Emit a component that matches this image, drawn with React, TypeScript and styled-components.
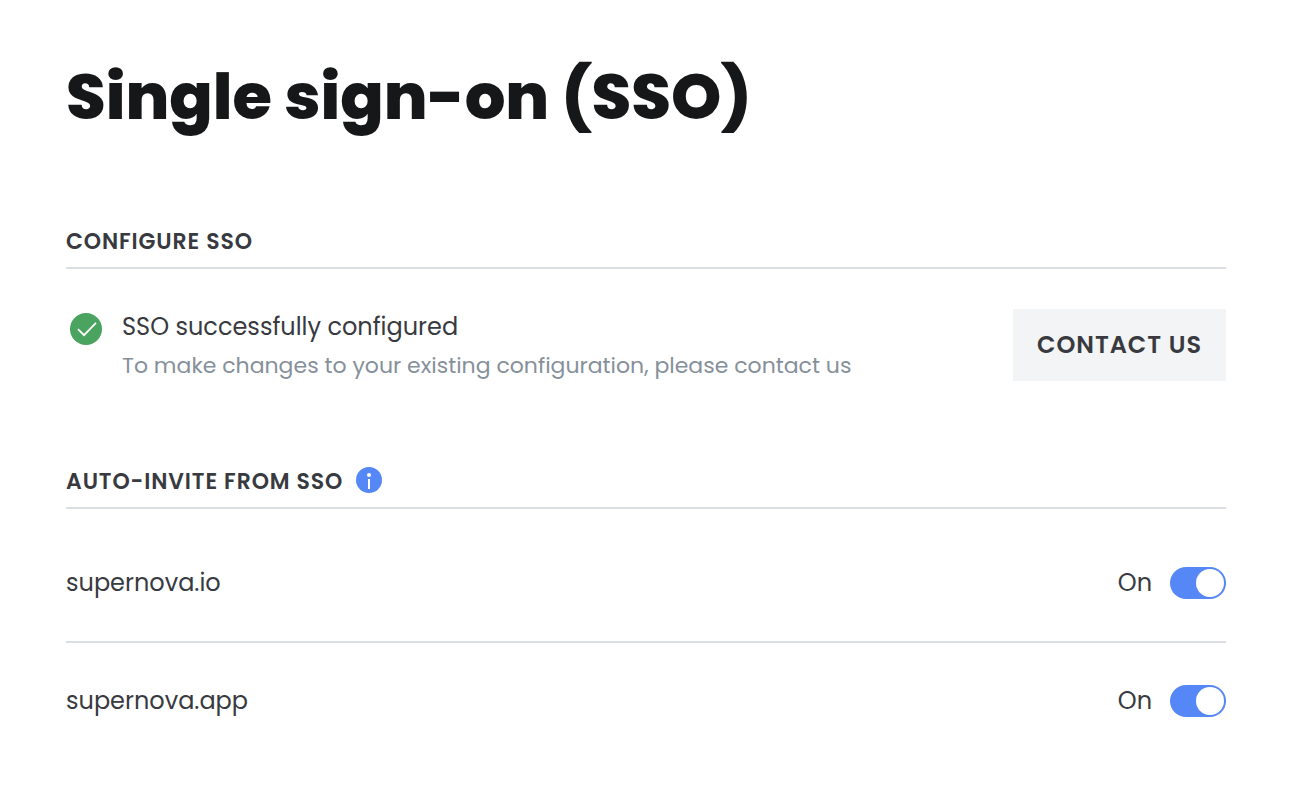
import React, { useState } from "react";
import styled, { createGlobalStyle } from "styled-components";

const GlobalStyle = createGlobalStyle`
  *, *::before, *::after { box-sizing: border-box; }
  body {
    margin: 0;
    background: #ffffff;
    color: #383a3f;
    font-family: Poppins, Inter, "Open Sans", sans-serif;
    font-size: 24px;
  }
`;

const Page = styled.main`
  padding: 48px 72px 40px 66px;
`;

const Title = styled.h1`
  margin: 0;
  color: #161718;
  font-size: 64px;
  line-height: 98px;
  font-weight: 800;
`;

const Section = styled.section`
  margin-top: 70px;
`;

const SectionHeader = styled.header`
  display: flex;
  align-items: center;
  gap: 13px;
  height: 53px;
  border-bottom: 2px solid #dadee2;
`;

const SectionTitle = styled.h2`
  margin: 0;
  font-size: 22px;
  line-height: 32px;
  font-weight: 600;
  letter-spacing: 0.04em;
  text-transform: uppercase;
`;

const Status = styled.div`
  display: flex;
  align-items: flex-start;
  padding: 40px 0 3px 4px;
`;

const StatusIcon = styled.svg`
  flex: none;
  width: 32px;
  height: 32px;
  margin: 4px 20px 0 0;
`;

const StatusText = styled.div`
  flex: 1;
`;

const StatusTitle = styled.p`
  margin: 0;
  line-height: 36px;
`;

const StatusNote = styled.p`
  margin: 4px 0 0;
  color: #86909a;
  font-size: 22px;
  line-height: 34px;
`;

const ContactButton = styled.button`
  height: 72px;
  padding: 0 24px;
  border: 0;
  background: #f2f4f5;
  color: #383a3f;
  font: inherit;
  line-height: 34px;
  font-weight: 600;
  letter-spacing: 0.04em;
  text-transform: uppercase;
  cursor: pointer;
`;

const InfoButton = styled.button`
  display: flex;
  padding: 0 0 4px;
  border: 0;
  background: none;
`;

const DomainList = styled.ul`
  margin: 0;
  padding: 16px 0 0;
  list-style: none;
`;

const DomainRow = styled.li`
  box-sizing: content-box;
  display: flex;
  align-items: center;
  justify-content: space-between;
  height: 116px;
  line-height: 36px;
  & + & { border-top: 2px solid #dadee2; }
`;

const ToggleLabel = styled.label`
  display: flex;
  align-items: center;
  gap: 18px;
  cursor: pointer;
`;

const Toggle = styled.input`
  appearance: none;
  display: flex;
  width: 56px;
  height: 32px;
  margin: 0;
  padding: 2px;
  border-radius: 16px;
  background: #b9bec4;
  cursor: pointer;
  &::before {
    content: "";
    width: 28px;
    height: 28px;
    border-radius: 50%;
    background: #ffffff;
  }
  &:checked { background: #5687f7; justify-content: flex-end; }
`;

function Domain({ name }: { name: string }) {
  const [on, setOn] = useState(true);
  return (
    <DomainRow>
      <span>{name}</span>
      <ToggleLabel>
        {on ? "On" : "Off"}
        <Toggle type="checkbox" role="switch" checked={on} onChange={() => setOn(!on)} />
      </ToggleLabel>
    </DomainRow>
  );
}

export default function App() {
  return (
    <>
      <GlobalStyle />
      <Page>
        <Title>Single sign-on (SSO)</Title>
        <Section>
          <SectionHeader>
            <SectionTitle>Configure SSO</SectionTitle>
          </SectionHeader>
          <Status>
            <StatusIcon viewBox="0 0 32 32" aria-hidden="true">
              <circle cx="16" cy="16" r="16" fill="#4aa35f" />
              <path d="M8 16.2l6 6L26 9.8" fill="none" stroke="#fff" strokeWidth="1.8" />
            </StatusIcon>
            <StatusText>
              <StatusTitle>SSO successfully configured</StatusTitle>
              <StatusNote>To make changes to your existing configuration, please contact us</StatusNote>
            </StatusText>
            <ContactButton type="button">Contact us</ContactButton>
          </Status>
        </Section>
        <Section>
          <SectionHeader>
            <SectionTitle>Auto-invite from SSO</SectionTitle>
            <InfoButton type="button" aria-label="About auto-invite">
              <svg width="26" height="26" viewBox="0 0 26 26" aria-hidden="true">
                <circle cx="13" cy="13" r="13" fill="#5687f7" />
                <circle cx="13" cy="8" r="2" fill="#fff" />
                <path d="M13 12v10" stroke="#fff" strokeWidth="2" />
              </svg>
            </InfoButton>
          </SectionHeader>
          <DomainList>
            <Domain name="supernova.io" />
            <Domain name="supernova.app" />
          </DomainList>
        </Section>
      </Page>
    </>
  );
}
